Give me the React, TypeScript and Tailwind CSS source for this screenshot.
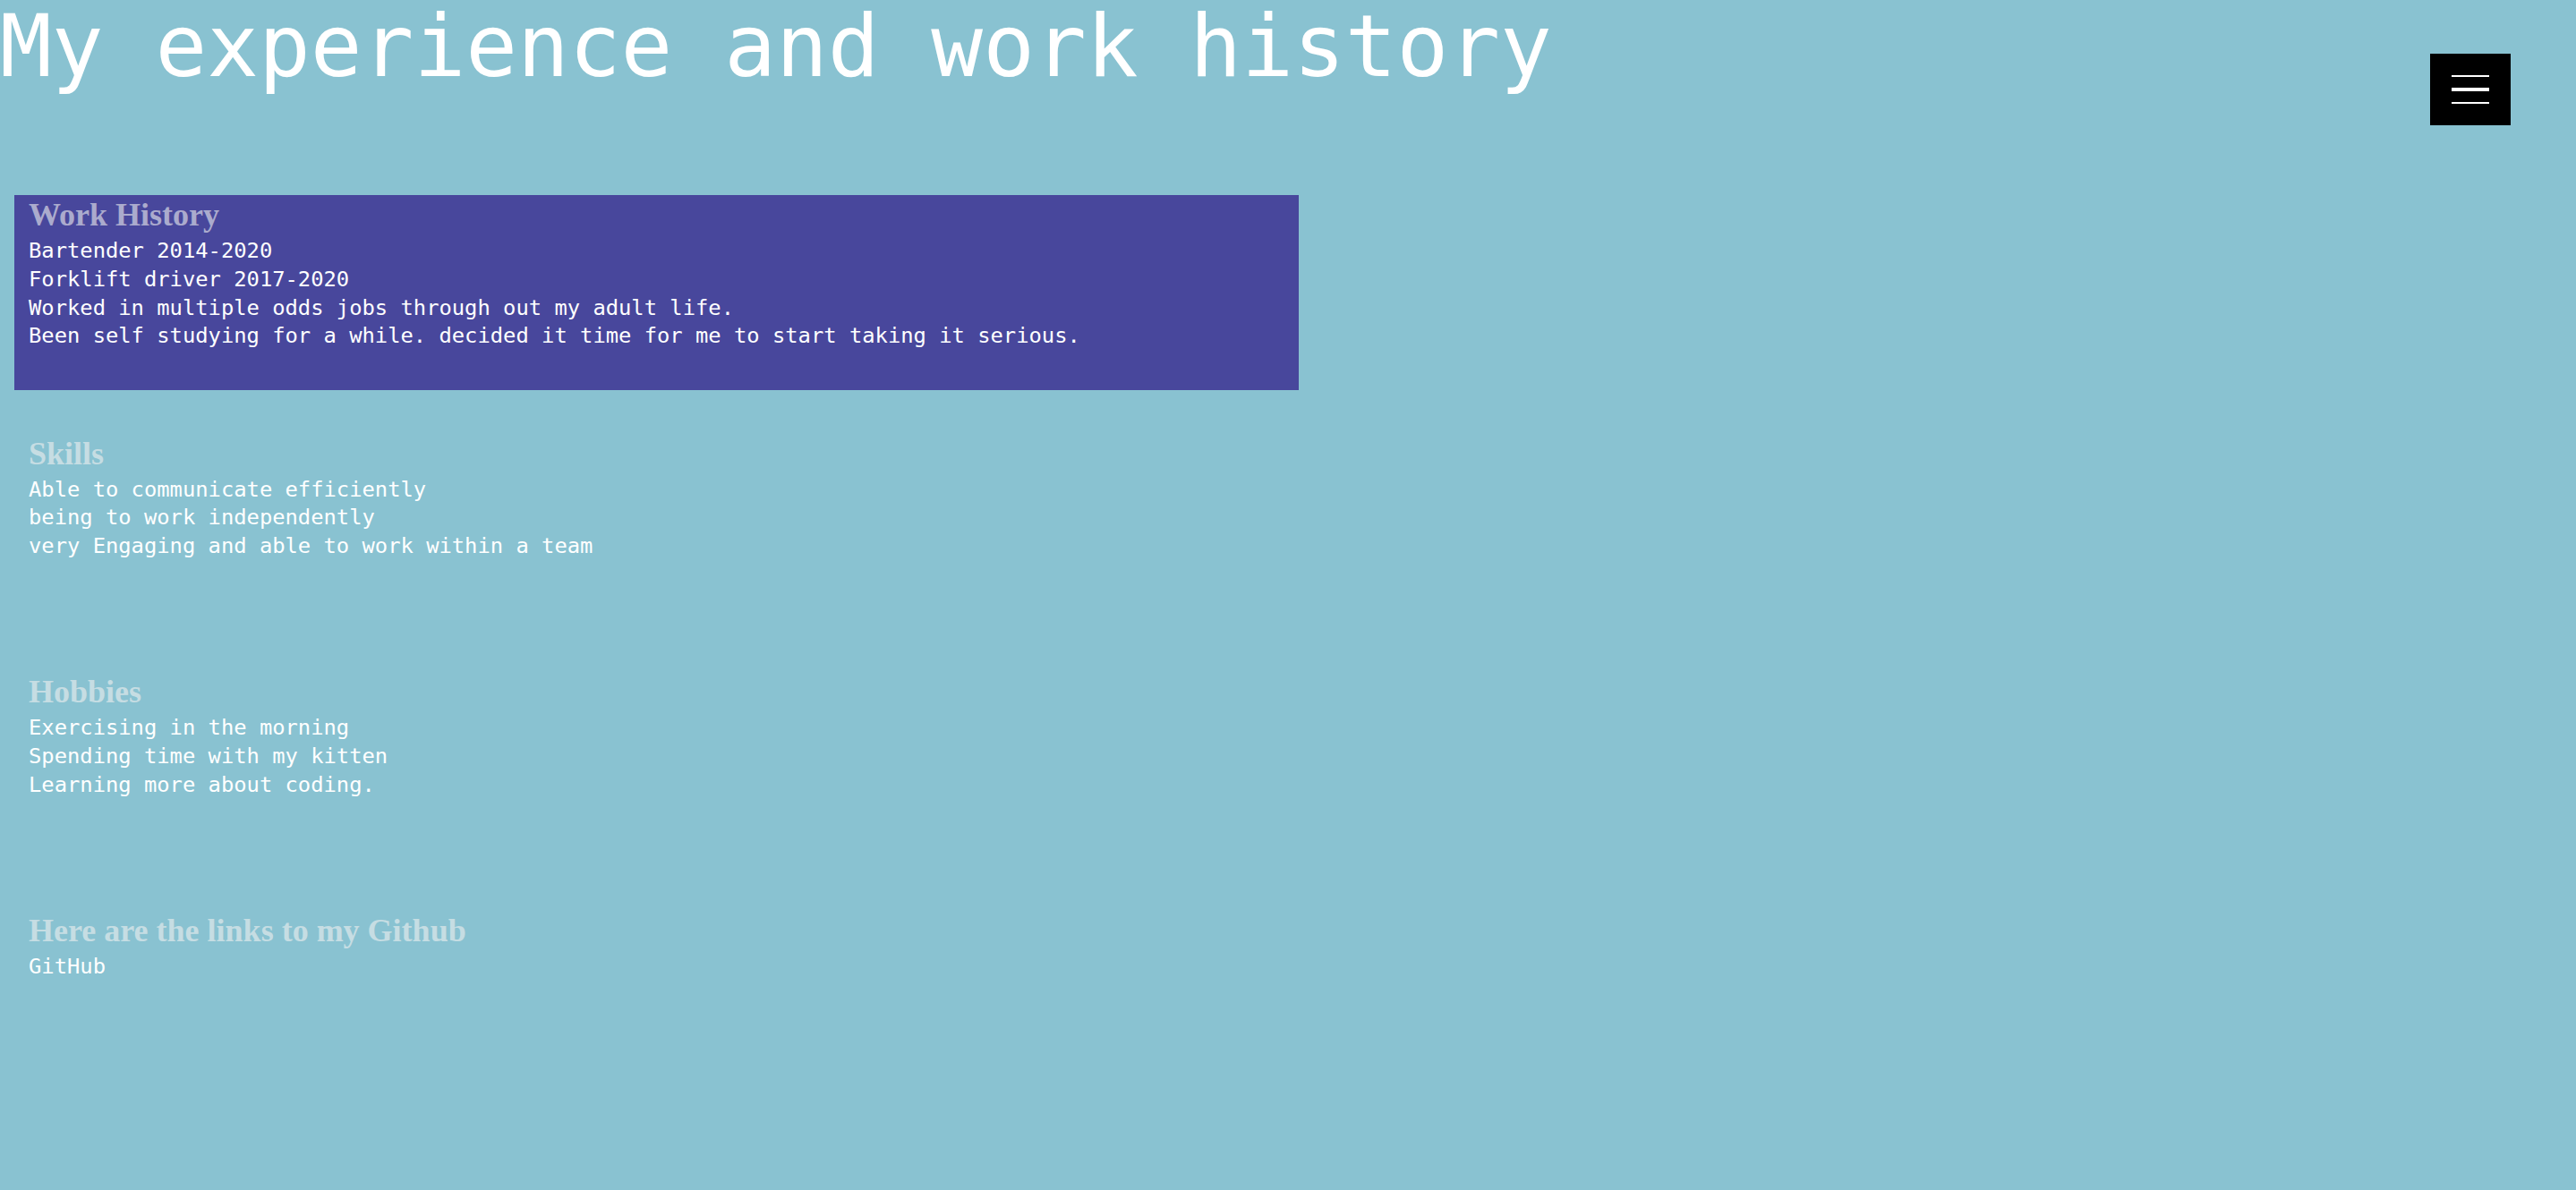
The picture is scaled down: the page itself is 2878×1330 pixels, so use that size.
import React from 'react';

type Section = {
  title: string;
  lines: string[];
  boxed?: boolean;
  link?: boolean;
};

const sections: Section[] = [
  {
    title: 'Work History',
    boxed: true,
    lines: [
      'Bartender 2014-2020',
      'Forklift driver 2017-2020',
      'Worked in multiple odds jobs through out my adult life.',
      'Been self studying for a while. decided it time for me to start taking it serious.',
    ],
  },
  {
    title: 'Skills',
    lines: ['Able to communicate efficiently', 'being to work independently', 'very Engaging and able to work within a team'],
  },
  {
    title: 'Hobbies',
    lines: ['Exercising in the morning', 'Spending time with my kitten', 'Learning more about coding.'],
  },
  {
    title: 'Here are the links to my Github',
    link: true,
    lines: ['GitHub'],
  },
];

const Menu: React.FC = () => (
  <button className="mt-[60px] mr-[73px] flex h-[80px] w-[90px] shrink-0 flex-col items-center justify-center gap-[12px] bg-black">
    <span className="block h-[2px] w-[42px] bg-white" />
    <span className="block h-[4px] w-[42px] bg-white" />
    <span className="block h-[2px] w-[42px] bg-white" />
  </button>
);

const App: React.FC = () => {
  return (
    <div className="min-h-[1330px] w-full bg-[#89c2d1] font-['DejaVu_Sans_Mono',monospace] text-white">
      <header className="flex items-start justify-between">
        <h1 className="m-0 text-[96px] leading-[104px] font-normal whitespace-nowrap">My experience and work history</h1>
        <Menu />
      </header>

      <main className="mt-[78px] ml-[16px] flex w-[1435px] flex-col gap-[48.67px]">
        {sections.map(section => (
          <section
            key={section.title}
            className={`h-[218px] pl-[16px] pt-[2px] ${section.boxed ? 'bg-[#48479c]' : ''}`}
          >
            <h2 className="font-['Liberation_Serif',serif] text-[36px] leading-[41px] font-bold text-[#f0f0f0]/60">
              {section.title}
            </h2>
            <div className="mt-[4px] text-[23.8px] leading-[31.8px]">
              {section.lines.map(line =>
                section.link ? (
                  <a key={line} href="#" className="block text-white no-underline">
                    {line}
                  </a>
                ) : (
                  <p key={line}>{line}</p>
                )
              )}
            </div>
          </section>
        ))}
      </main>
    </div>
  );
};

export default App;
